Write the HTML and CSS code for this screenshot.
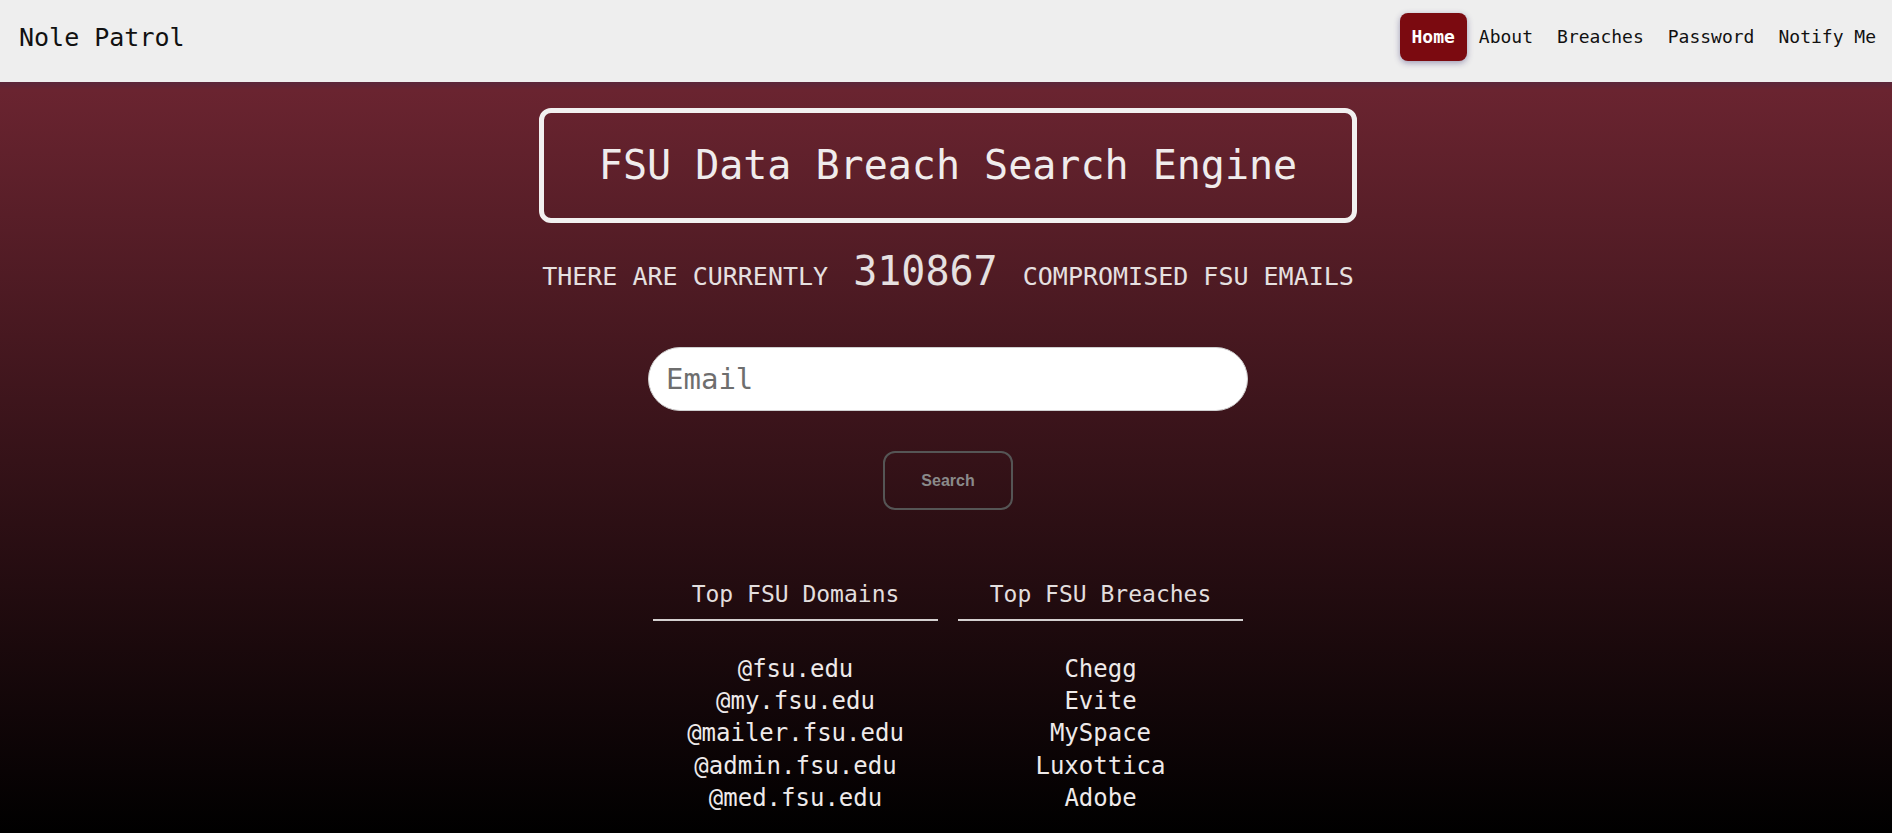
FILE: index.html
```html
<!DOCTYPE html>
<html lang="en">
<head>
<meta charset="utf-8">
<title>Nole Patrol</title>
<link rel="stylesheet" href="styles.css">
</head>
<body>
<header class="topbar">
  <div class="brand">Nole Patrol</div>
  <nav class="nav">
    <a class="nav-link active" href="#">Home</a>
    <a class="nav-link" href="#">About</a>
    <a class="nav-link" href="#">Breaches</a>
    <a class="nav-link" href="#">Password</a>
    <a class="nav-link" href="#">Notify Me</a>
  </nav>
</header>
<main class="hero">
  <h1 class="title-box">FSU Data Breach Search Engine</h1>
  <p class="stats">THERE ARE CURRENTLY <span class="count">310867</span> COMPROMISED FSU EMAILS</p>
  <form class="search-form">
    <input class="email-input" type="text" placeholder="Email">
    <button class="search-btn" type="button">Search</button>
  </form>
  <section class="tops">
    <div class="top-col">
      <h2 class="top-head">Top FSU Domains</h2>
      <ul class="top-list">
        <li>@fsu.edu</li>
        <li>@my.fsu.edu</li>
        <li>@mailer.fsu.edu</li>
        <li>@admin.fsu.edu</li>
        <li>@med.fsu.edu</li>
      </ul>
    </div>
    <div class="top-col">
      <h2 class="top-head">Top FSU Breaches</h2>
      <ul class="top-list">
        <li>Chegg</li>
        <li>Evite</li>
        <li>MySpace</li>
        <li>Luxottica</li>
        <li>Adobe</li>
      </ul>
    </div>
  </section>
</main>
</body>
</html>
```

FILE: styles.css
```css
* { box-sizing: border-box; }

html, body {
  margin: 0;
  padding: 0;
  height: 100%;
}

body {
  font-family: "DejaVu Sans Mono", "Liberation Mono", monospace;
  background: #000;
  display: flex;
  flex-direction: column;
}

.topbar {
  height: 82px;
  flex: 0 0 82px;
  background: #eeeeee;
  display: flex;
  align-items: center;
  justify-content: space-between;
  padding: 0 4px 8px 19px;
}

.brand {
  font-size: 25px;
  color: #111;
}

.nav {
  display: flex;
  align-items: center;
}

.nav-link {
  font-size: 18px;
  color: #111;
  text-decoration: none;
  padding: 0 12px;
  line-height: 48px;
}

.nav-link.active {
  background: #7b0a10;
  color: #fff;
  font-weight: bold;
  border-radius: 8px;
  box-shadow: 0 2px 6px rgba(60, 50, 110, 0.45);
}

.hero {
  flex: 1;
  background: linear-gradient(to bottom, #5a263a 0, #6a2430 8px, #000 100%);
  display: flex;
  flex-direction: column;
  align-items: center;
  padding-left: 4px;
  color: #ebe6e6;
}

.title-box {
  margin: 26px 0 0;
  width: 818px;
  border: 5px solid #f2f0f0;
  border-radius: 12px;
  padding: 29px 0;
  font-size: 40px;
  line-height: 47px;
  font-weight: normal;
  text-align: center;
  color: #f0ecec;
}

.stats {
  margin: 25px 0 0;
  font-size: 25px;
  line-height: 47px;
  color: #e6e0e0;
}

.count {
  font-size: 40px;
  margin: 0 10px;
}

.search-form {
  display: flex;
  flex-direction: column;
  align-items: center;
  margin-top: 47px;
}

.email-input {
  width: 600px;
  height: 64px;
  border-radius: 32px;
  border: 1px solid #cfcfcf;
  background: #fff;
  padding: 0 17px;
  font-family: "DejaVu Sans Mono", monospace;
  font-size: 29px;
  color: #222;
  outline: none;
}

.email-input::placeholder {
  color: #6e6e6e;
}

.search-btn {
  margin-top: 40px;
  width: 130px;
  height: 59px;
  border: 2px solid #555;
  border-radius: 12px;
  background: transparent;
  font-family: "Liberation Sans", Arial, sans-serif;
  font-weight: bold;
  font-size: 16px;
  color: #8a8a8a;
}

.tops {
  display: flex;
  gap: 20px;
  margin-top: 71px;
}

.top-col {
  width: 285px;
  text-align: center;
}

.top-head {
  margin: 0;
  font-size: 23px;
  line-height: 27px;
  font-weight: normal;
  color: #e2dede;
  padding-bottom: 11px;
  border-bottom: 2px solid #d4d0d0;
}

.top-list {
  list-style: none;
  margin: 32px 0 0;
  padding: 0;
  font-size: 24px;
  line-height: 32.2px;
  color: #eeeaea;
}
```
